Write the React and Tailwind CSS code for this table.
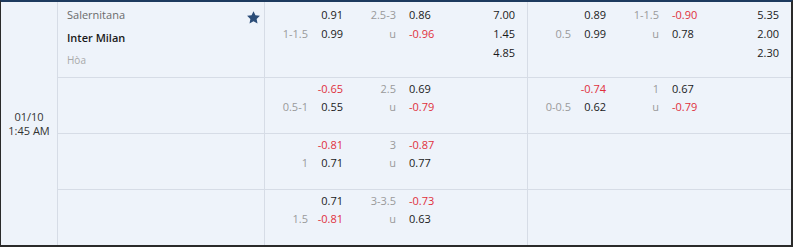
import React from "react";

const font = { fontFamily: '"Open Sans", "Noto Sans", sans-serif' };

const Num = ({ v }) => (
  <span className={v && v.startsWith("-") ? "text-[#e0303c]" : "text-[#1a1a1a]"}>{v}</span>
);

// one block of odds: handicap, over/under, 1x2
const OddsBlock = ({ data, first }) => {
  const lines = first ? "pt-[3px] leading-[19px]" : "pt-[2px] leading-[18px]";
  if (!data) return <div className={`flex-1 ${lines}`} />;
  const { hdp, h1, h2, ou, o1, o2, x } = data;
  return (
    <div className={`flex-1 flex ${lines}`}>
      <div className="w-[43px] flex flex-col text-right text-[#9a9a9a]">
        <span>&nbsp;</span>
        <span>{hdp}</span>
      </div>
      <div className="w-[35px] flex flex-col text-right">
        <Num v={h1} />
        <Num v={h2} />
      </div>
      <div className="w-[53px] flex flex-col text-right text-[#9a9a9a]">
        <span>{ou}</span>
        <span>u</span>
      </div>
      <div className="pl-[13px] flex flex-col">
        <Num v={o1} />
        <Num v={o2} />
      </div>
      <div className="ml-auto pr-[12px] flex flex-col text-right text-[#1a1a1a]">
        {(x || []).map((n, i) => (
          <span key={i}>{n}</span>
        ))}
      </div>
    </div>
  );
};

const rows = [
  {
    ft: { hdp: "1-1.5", h1: "0.91", h2: "0.99", ou: "2.5-3", o1: "0.86", o2: "-0.96", x: ["7.00", "1.45", "4.85"] },
    h1: { hdp: "0.5", h1: "0.89", h2: "0.99", ou: "1-1.5", o1: "-0.90", o2: "0.78", x: ["5.35", "2.00", "2.30"] },
  },
  {
    ft: { hdp: "0.5-1", h1: "-0.65", h2: "0.55", ou: "2.5", o1: "0.69", o2: "-0.79" },
    h1: { hdp: "0-0.5", h1: "-0.74", h2: "0.62", ou: "1", o1: "0.67", o2: "-0.79" },
  },
  {
    ft: { hdp: "1", h1: "-0.81", h2: "0.71", ou: "3", o1: "-0.87", o2: "0.77" },
    h1: null,
  },
  {
    ft: { hdp: "1.5", h1: "0.71", h2: "-0.81", ou: "3-3.5", o1: "-0.73", o2: "0.63" },
    h1: null,
  },
];

const StarIcon = () => (
  <svg width="15" height="15" viewBox="0 0 24 24" className="mt-[8px]">
    <path
      d="M12 1.8l3.1 6.6 7.2.9-5.3 5 1.4 7.1L12 17.9l-6.4 3.5 1.4-7.1-5.3-5 7.2-.9z"
      fill="#2c4d78"
    />
  </svg>
);

export default function App() {
  return (
    <div
      className="w-[793px] h-[247px] bg-[#eef3fa] border-t-2 border-t-[#1d3a5e] border-l border-r-2 border-b-2 border-l-[#2a2a2a] border-r-[#2a2a2a] border-b-[#2a2a2a] flex text-[11px]"
      style={font}
    >
      {/* time */}
      <div className="w-[57px] border-r border-[#d6dce6] flex flex-col items-center justify-center text-[#333] leading-[14px] pt-[1px]">
        <span>01/10</span>
        <span>1:45 AM</span>
      </div>

      <div className="flex-1 flex flex-col">
        {rows.map((r, i) => (
          <div
            key={i}
            className={`flex ${i === 0 ? "h-[76px]" : i === 3 ? "h-[55px]" : "h-[56px]"} ${
              i < 3 ? "border-b border-[#d6dce6]" : ""
            }`}
          >
            <div className="w-[207px] border-r border-[#d6dce6] flex pl-[9px] pr-[3px]">
              {i === 0 && (
                <>
                  <div className="flex-1 flex flex-col pt-[1px] leading-[23px]">
                    <span className="text-[#6b6b6b]">Salernitana</span>
                    <span className="text-[#1a1a1a] font-semibold">Inter Milan</span>
                    <span className="text-[#a8a8a8] text-[10px]">Hòa</span>
                  </div>
                  <StarIcon />
                </>
              )}
            </div>
            <div className="w-[263px] border-r border-[#d6dce6] flex">
              <OddsBlock data={r.ft} first={i === 0} />
            </div>
            <div className="flex-1 flex">
              <OddsBlock data={r.h1} first={i === 0} />
            </div>
          </div>
        ))}
      </div>
    </div>
  );
}
